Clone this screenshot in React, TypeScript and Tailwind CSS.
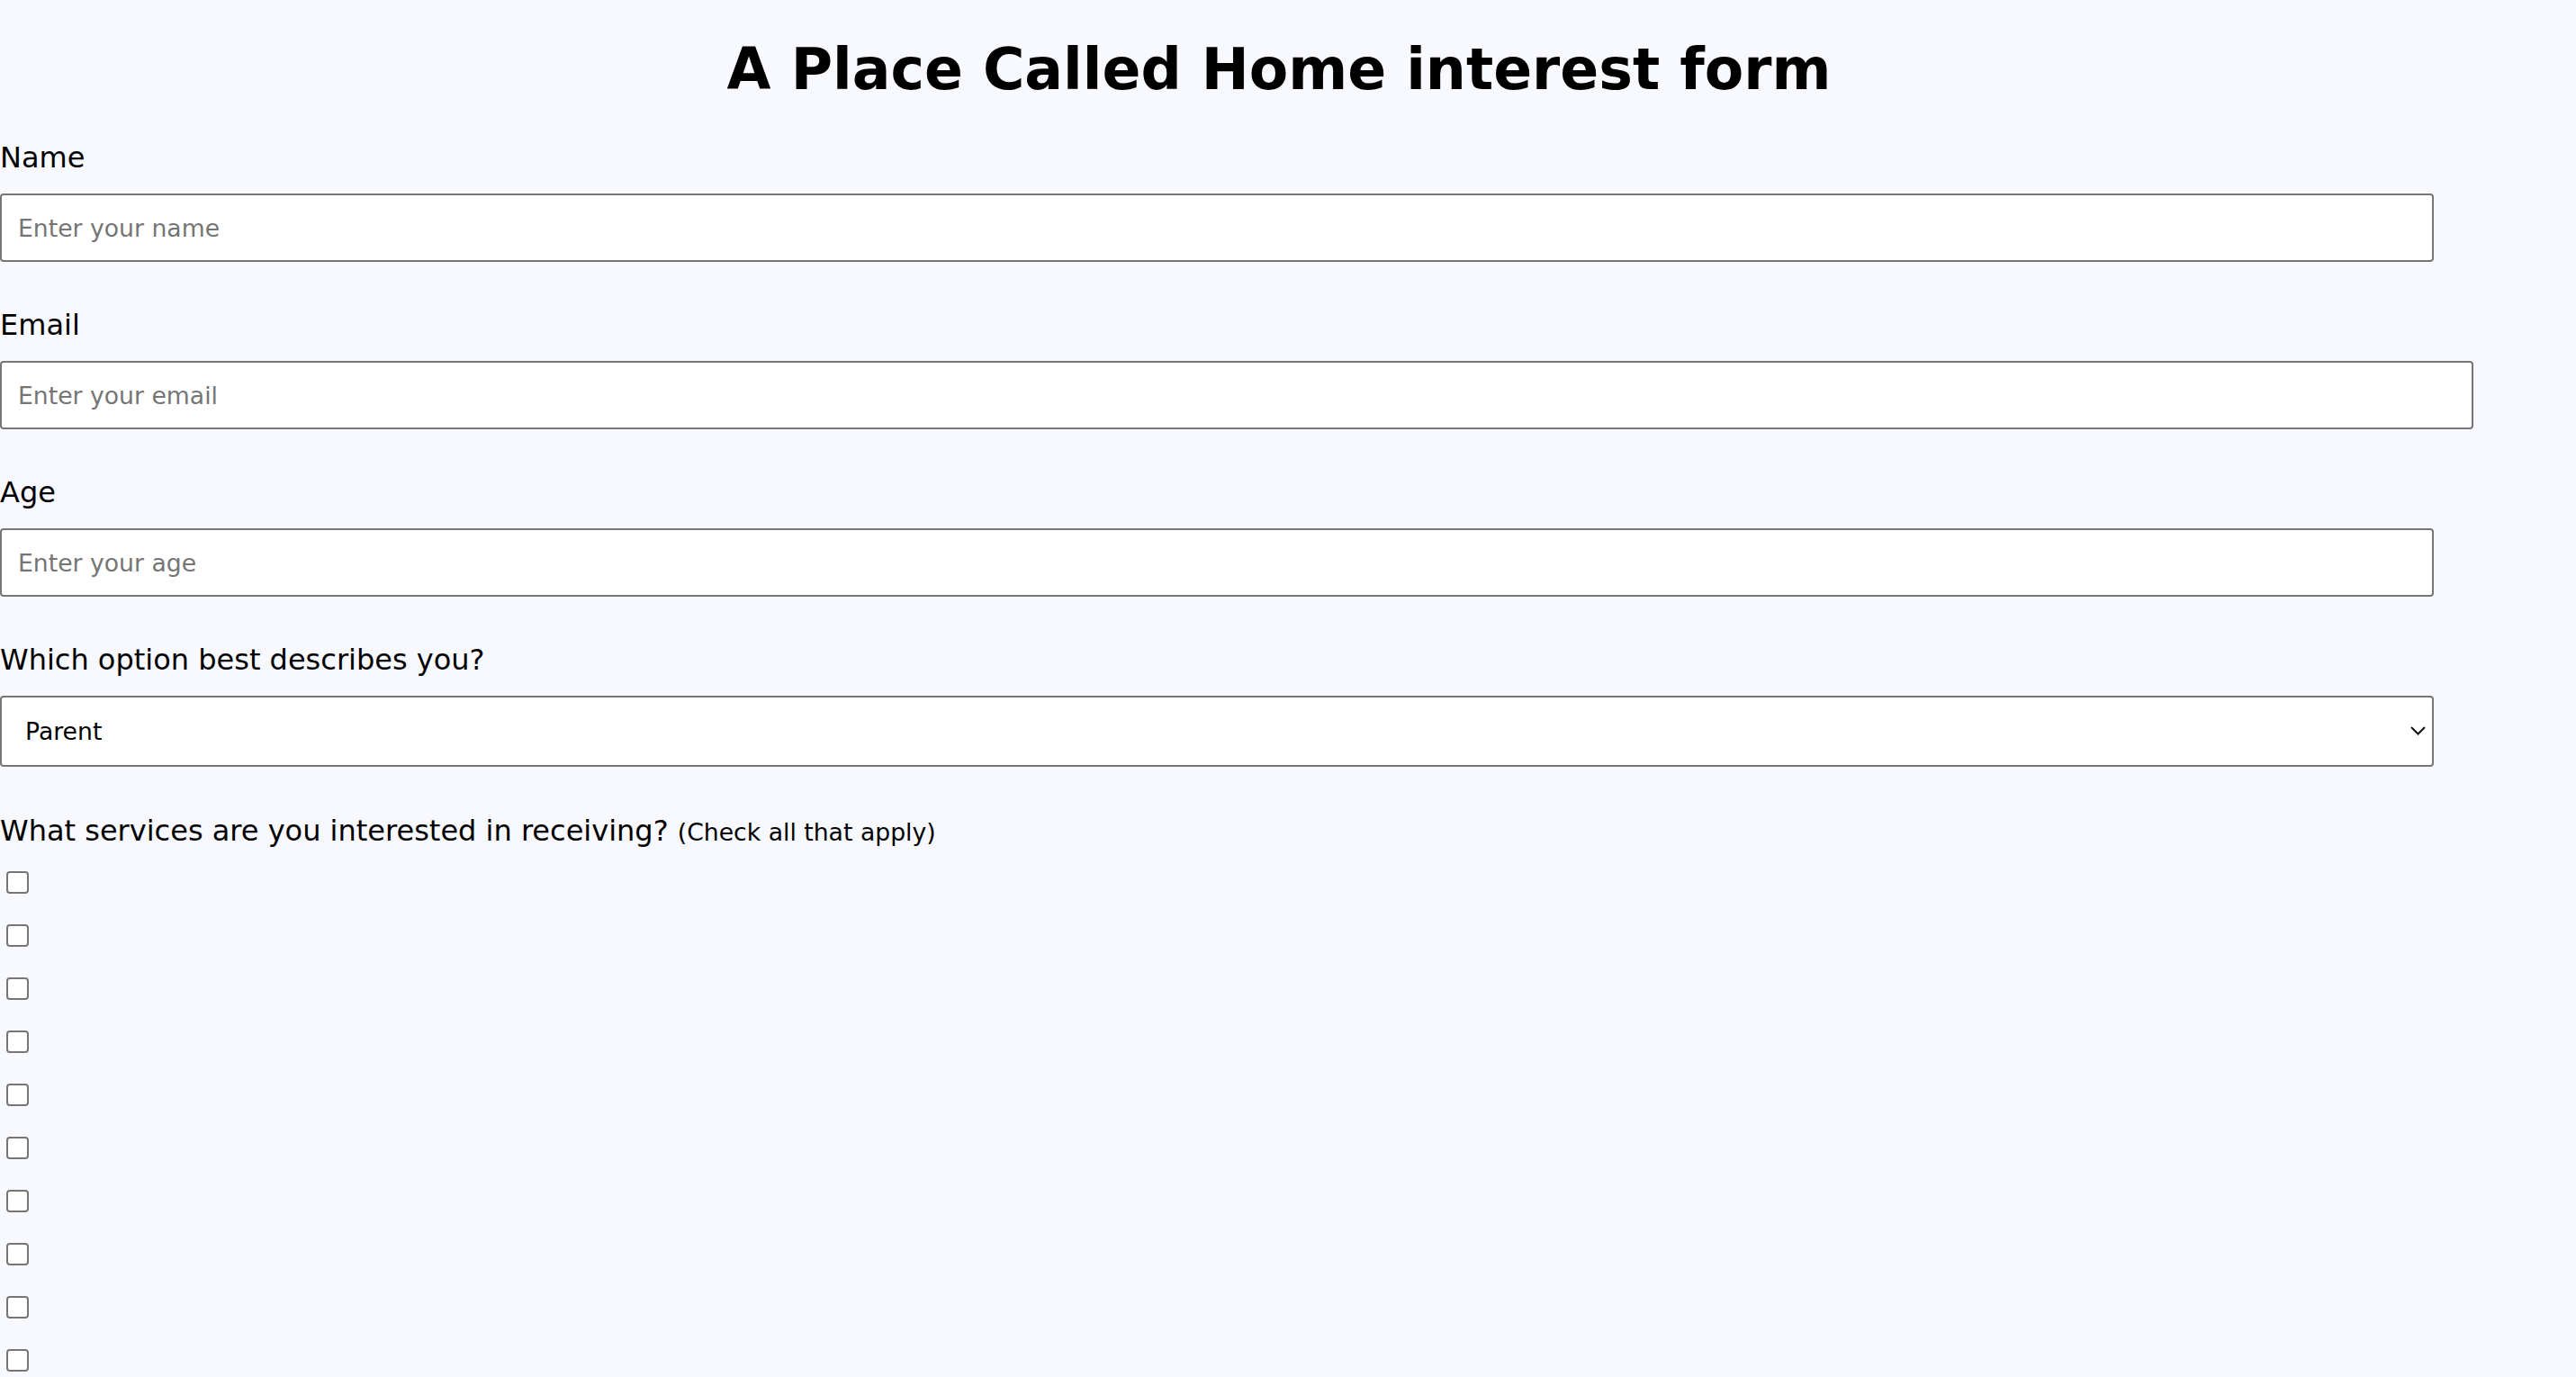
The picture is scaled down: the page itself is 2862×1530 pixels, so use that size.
import React from 'react';

const font = { fontFamily: '"DejaVu Sans", Verdana, sans-serif' };

function Field({ label, placeholder, wide }: { label: string; placeholder: string; wide?: boolean }) {
  return (
    <div className="mb-[52px] flex flex-col">
      <label className="text-[32px] leading-[37px] text-black">{label}</label>
      <input
        type="text"
        placeholder={placeholder}
        className={
          (wide ? 'w-[2748px] ' : 'w-[2704px] ') +
          'mt-[21px] h-[76px] rounded-[4px] border-2 border-[#767676] bg-white pl-[18px] text-[26.67px] text-black placeholder:text-[#757575] outline-none'
        }
      />
    </div>
  );
}

export default function App() {
  const services = Array.from({ length: 10 }, (_, i) => i);

  return (
    <div className="min-h-screen bg-[#f8f8ff] pb-10" style={font}>
      <h1 className="pt-[40px] pr-[20px] pb-[42px] text-center text-[63.3px] font-bold leading-[75px] text-black">
        A Place Called Home interest form
      </h1>

      <form className="flex flex-col">
        <Field label="Name" placeholder="Enter your name" />
        <Field label="Email" placeholder="Enter your email" wide />
        <Field label="Age" placeholder="Enter your age" />

        <div className="mb-[53px] flex flex-col">
          <label className="text-[32px] leading-[37px] text-black">Which option best describes you?</label>
          <div className="relative mt-[21px] w-[2704px]">
            <select
              defaultValue="parent"
              className="h-[79px] w-full appearance-none rounded-[4px] border-2 border-[#767676] bg-white pl-[26px] text-[26.67px] text-black outline-none"
            >
              <option value="parent">Parent</option>
              <option value="student">Student</option>
              <option value="other">Other</option>
            </select>
            {/* dropdown chevron */}
            <svg
              className="pointer-events-none absolute right-[9px] top-[34px]"
              width="17"
              height="10"
              viewBox="0 0 17 10"
              fill="none"
            >
              <path d="M1 1l7.5 7.5L16 1" stroke="#111" strokeWidth="2" />
            </svg>
          </div>
        </div>

        <div className="flex flex-col">
          <p className="text-[32px] leading-[37px] text-black">
            What services are you interested in receiving?{' '}
            <span className="text-[26.67px]">(Check all that apply)</span>
          </p>
          <div className="mt-[25px] flex flex-col gap-[34px] pl-[7px]">
            {services.map((i) => (
              <input
                key={i}
                type="checkbox"
                className="h-[25px] w-[25px] appearance-none rounded-[4px] border-2 border-[#767676] bg-white"
              />
            ))}
          </div>
        </div>
      </form>
    </div>
  );
}
